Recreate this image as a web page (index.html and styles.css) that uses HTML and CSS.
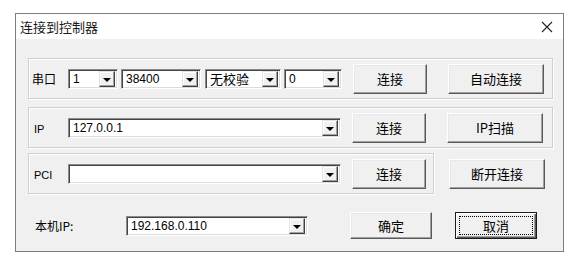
FILE: index.html
```html
<!DOCTYPE html>
<html lang="zh-CN">
<head>
<meta charset="UTF-8">
<title>连接到控制器</title>
<link rel="stylesheet" href="styles.css">
</head>
<body>
  <div class="window">
    <div class="titlebar">
      <span class="title">连接到控制器</span>
      <svg class="close" width="12" height="12" viewBox="0 0 12 12">
        <path d="M1 1 L11 11 M11 1 L1 11" stroke="#222" stroke-width="1.1" fill="none"/>
      </svg>
    </div>

    <div class="content">
      <!-- serial port -->
      <div class="group group-full">
        <span class="label label-serial">串口</span>
        <div class="combo w-port"><span class="combo-text">1</span><span class="arrow"></span></div>
        <div class="combo w-baud"><span class="combo-text">38400</span><span class="arrow"></span></div>
        <div class="combo w-parity"><span class="combo-text cjk">无校验</span><span class="arrow"></span></div>
        <div class="combo w-stop"><span class="combo-text">0</span><span class="arrow"></span></div>
        <button class="btn btn-connect">连接</button>
        <button class="btn btn-wide">自动连接</button>
      </div>

      <!-- ip -->
      <div class="group group-full group-ip">
        <span class="label label-short">IP</span>
        <div class="combo w-long"><span class="combo-text">127.0.0.1</span><span class="arrow"></span></div>
        <button class="btn btn-connect">连接</button>
        <button class="btn btn-wide">IP扫描</button>
      </div>

      <!-- pci -->
      <div class="row-pci">
        <div class="group group-pci">
          <span class="label label-short">PCI</span>
          <div class="combo w-long"><span class="combo-text"></span><span class="arrow"></span></div>
          <button class="btn btn-connect">连接</button>
        </div>
        <button class="btn btn-wide btn-out">断开连接</button>
      </div>

      <!-- local ip -->
      <div class="row-local">
        <span class="label label-local">本机IP:</span>
        <div class="combo w-local"><span class="combo-text">192.168.0.110</span><span class="arrow"></span></div>
        <button class="btn btn-small btn-ok">确定</button>
        <button class="btn btn-small btn-default"><span class="focus">取消</span></button>
      </div>
    </div>
  </div>
</body>
</html>
```

FILE: styles.css
```css
body {
  margin: 0;
  padding: 13px 0 0 15px;
  background-color: #ffffff;
  font-family: "Noto Sans CJK SC", "Liberation Sans", sans-serif;
  font-size: 13px;
  color: #000000;
}

.window {
  width: 547px;
  height: 237px;
  border: 1px solid #7d7d7d;
  background-color: #f0f0f0;
}

.titlebar {
  height: 25px;
  background-color: #ffffff;
  display: flex;
  align-items: center;
  justify-content: space-between;
  padding: 0 10px 0 4px;
}

.title {
  font-size: 13px;
  line-height: 25px;
  color: #1a1a1a;
}

.close {
  display: block;
  margin-top: 1px;
}

.content {
  padding: 19px 0 0 12px;
}

/* group boxes, etched border */
.group {
  box-sizing: border-box;
  height: 41px;
  display: flex;
  align-items: center;
  border: 1px solid #cfcfcf;
  box-shadow: inset 1px 1px 0 #ffffff, 1px 1px 0 #ffffff;
  padding-left: 3px;
}

.group-full {
  width: 525px;
}

.group-ip {
  margin-top: 8px;
}

.row-pci {
  display: flex;
  align-items: center;
  margin-top: 5px;
}

.group-pci {
  width: 406px;
}

.label {
  flex: none;
  box-sizing: border-box;
  font-size: 12px;
}

.label-serial {
  width: 36px;
}

.label-short {
  width: 36px;
  padding-left: 2px;
  font-family: "Liberation Sans", sans-serif;
  font-size: 11px;
  line-height: 14px;
  margin-top: 2px;
}

/* combo boxes */
.combo {
  flex: none;
  box-sizing: border-box;
  height: 20px;
  display: flex;
  align-items: center;
  justify-content: space-between;
  background-color: #ffffff;
  border-top: 1px solid #8a8a8a;
  border-left: 1px solid #8a8a8a;
  border-right: 1px solid #ffffff;
  border-bottom: 1px solid #ffffff;
  box-shadow: inset 1px 1px 0 #444444, inset -1px -1px 0 #dcdcdc;
  padding: 2px 2px 2px 4px;
  margin-right: 3px;
}

.combo-text {
  font-family: "Liberation Sans", sans-serif;
  font-size: 12px;
  line-height: 14px;
}

.combo-text.cjk {
  font-family: "Noto Sans CJK SC", sans-serif;
  font-size: 13px;
}

.arrow {
  box-sizing: border-box;
  width: 16px;
  height: 16px;
  flex: none;
  background-color: #f0f0f0;
  border-top: 1px solid #e3e3e3;
  border-left: 1px solid #e3e3e3;
  border-right: 1px solid #404040;
  border-bottom: 1px solid #404040;
  box-shadow: inset -1px -1px 0 #a0a0a0, inset 1px 1px 0 #ffffff;
  position: relative;
}

.arrow::after {
  content: "";
  position: absolute;
  left: 3px;
  top: 6px;
  border-left: 4px solid transparent;
  border-right: 4px solid transparent;
  border-top: 4px solid #000000;
}

.w-port { width: 50px; }
.w-baud { width: 80px; margin-right: 4px; }
.w-parity { width: 76px; }
.w-stop { width: 58px; }
.w-long { width: 273px; }
.w-local { width: 182px; }

/* push buttons */
.btn {
  flex: none;
  box-sizing: border-box;
  height: 30px;
  font-family: "Noto Sans CJK SC", sans-serif;
  font-size: 13px;
  color: #000000;
  background-color: #f0f0f0;
  border-top: 1px solid #ffffff;
  border-left: 1px solid #ffffff;
  border-right: 1px solid #5a5a5a;
  border-bottom: 1px solid #5a5a5a;
  box-shadow: inset -1px -1px 0 #a0a0a0, inset 1px 1px 0 #e8e8e8;
  padding: 0;
}

.btn-connect {
  width: 74px;
  margin-left: 8px;
}

.btn-wide {
  width: 96px;
  margin-left: 21px;
}

.btn-out {
  margin-left: 15px;
}

.row-local {
  display: flex;
  align-items: center;
  margin-top: 18px;
  height: 27px;
}

.label-local {
  width: 98px;
  padding-left: 7px;
  font-size: 12px;
}

.btn-small {
  width: 82px;
  height: 27px;
}

.btn-ok {
  margin-left: 39px;
}

.btn-default {
  margin-left: 23px;
  border: 1px solid #1a1a1a;
  box-shadow: inset 1px 1px 0 #ffffff, inset -1px -1px 0 #5a5a5a, inset -2px -2px 0 #a0a0a0;
  padding: 3px;
}

.focus {
  display: flex;
  align-items: center;
  justify-content: center;
  height: 100%;
  border: 1px dotted #000000;
  box-sizing: border-box;
}
```
